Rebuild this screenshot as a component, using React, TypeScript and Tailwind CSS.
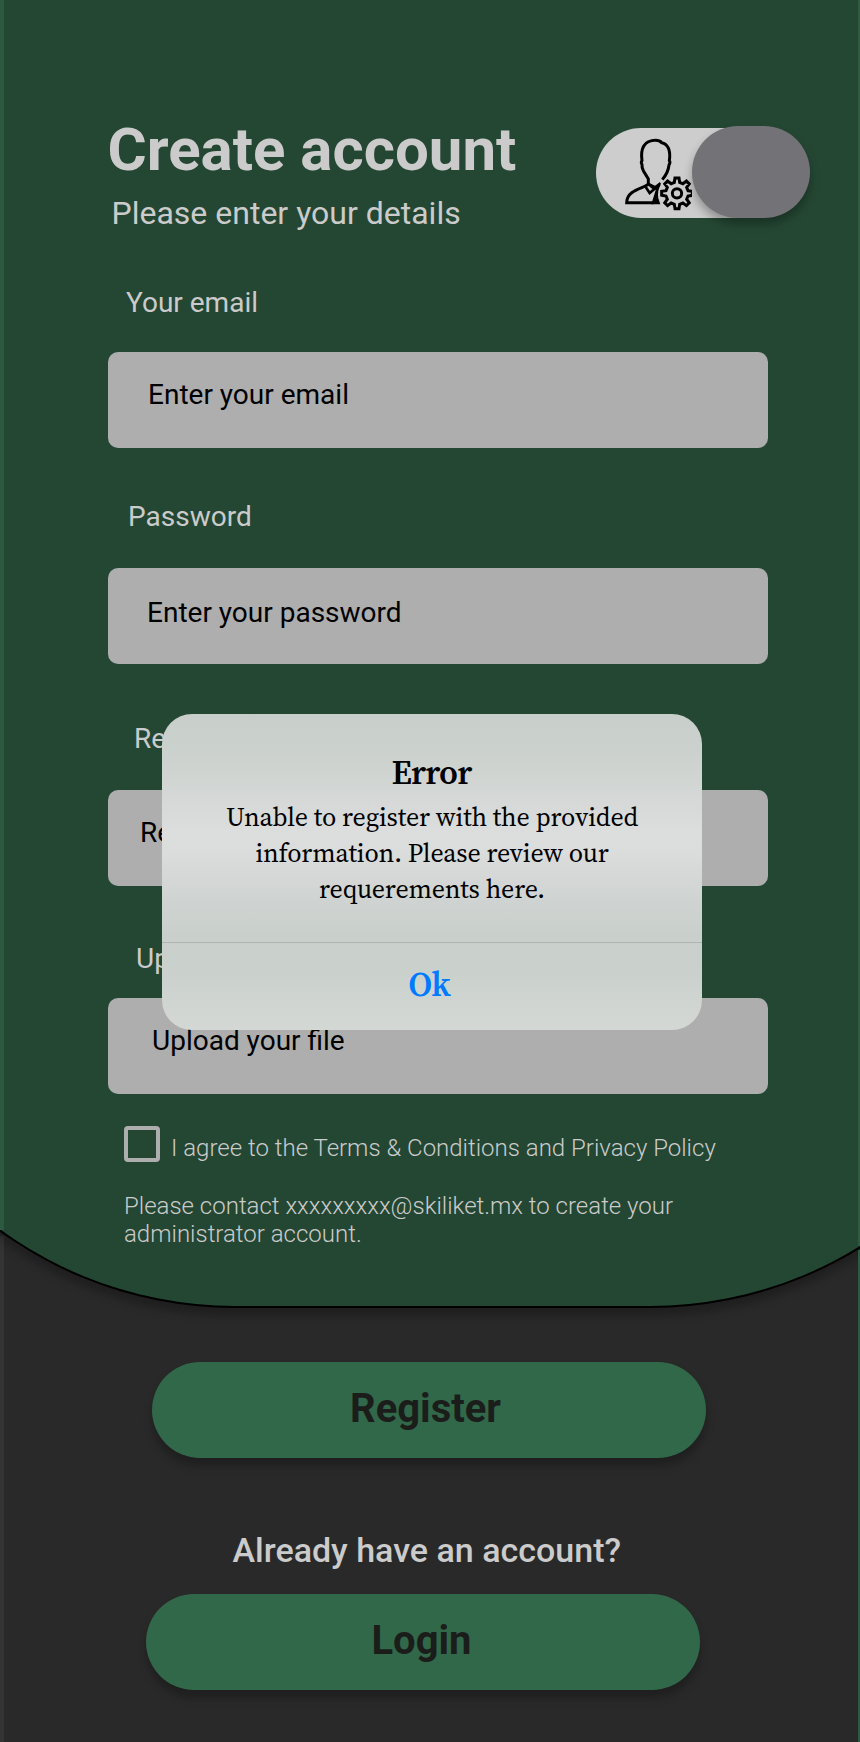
type FieldProps = {
  label: string;
  placeholder: string;
  labelClass: string;
  boxClass: string;
};

function Field({ label, placeholder, labelClass, boxClass }: FieldProps) {
  return (
    <div className="flex flex-col">
      <span className={`text-[28px] leading-8 text-[#cbcbcb] ${labelClass}`}>{label}</span>
      <div className={`h-24 w-[660px] rounded-[10px] bg-[#aeaeae] text-[28px] leading-8 text-black ${boxClass}`}>
        {placeholder}
      </div>
    </div>
  );
}

function gearPath(cx: number, cy: number) {
  const points: string[] = [];
  for (let i = 0; i < 8; i++) {
    const a = (i * Math.PI) / 4;
    const corners = [
      [33, -8],
      [46, -6],
      [46, 6],
      [33, 8],
    ];
    for (const [r, t] of corners) {
      const x = cx + r * Math.cos(a) - t * Math.sin(a);
      const y = cy + r * Math.sin(a) + t * Math.cos(a);
      points.push(`${x.toFixed(1)} ${y.toFixed(1)}`);
    }
  }
  return `M${points.join("L")}Z`;
}

function AdminIcon() {
  return (
    <svg viewBox="130 80 207 222" className="h-[74px] w-[69px]" fill="none" stroke="#000" strokeWidth="9">
      <path d="M206 224V206L191 181Q186 171 187 163Q183 156 187 151C182 116 192 90 228 90Q240 90 246 97C264 100 274 120 269 151Q273 156 268 164Q266 186 248 208" />
      <path d="M207 221C194 234 141 238 141 277H222" />
      <path d="M198 230L210 248L224 236L207 222" strokeWidth="8" />
      <path d="M241 216L224 231L228 240L215 282H242L236 264Q232 242 243 224Z" fill="#000" stroke="none" />
      <path d="M208 221L226 230L242 218" strokeWidth="6" />
      <path d={gearPath(292, 249)} strokeWidth="9" />
      <circle cx="292" cy="249" r="14" />
    </svg>
  );
}

function RoleToggle() {
  return (
    <div className="flex h-[92px] w-[214px] items-center">
      <div className="mt-0.5 flex h-[90px] w-[150px] shrink-0 items-start rounded-l-full bg-[#cdcdcd] pt-[9px] pl-[27px]">
        <AdminIcon />
      </div>
      <div className="-ml-[54px] h-[92px] w-[118px] shrink-0 rounded-full bg-[#737277] shadow-[0_6px_10px_rgba(0,0,0,0.3)]" />
    </div>
  );
}

function ErrorDialog() {
  return (
    <div
      role="alertdialog"
      className="absolute top-[714px] left-[162px] flex h-[316px] w-[540px] flex-col rounded-[30px] bg-linear-[180deg,#c8cec9_0%,#cbd1cd_12%,#dcdddd_37%,#dbdcdc_44%,#ced3d1_60%,#c9d0cb_70%,#cad1cc_82%,#d4d8d5_100%] text-center font-['Source_Serif_4','Liberation_Serif',serif] text-black"
    >
      <div className="flex h-[228px] flex-col items-center pt-9">
        <h2 className="pr-px text-[34px] leading-[44px] font-semibold tracking-[-0.82px]">Error</h2>
        <p className="mt-[5px] w-[440px] text-[26px] leading-9 tracking-[-0.16px]">
          Unable to register with the provided information. Please review our requerements here.
        </p>
      </div>
      <button className="flex h-[88px] items-center justify-center border-t border-[#b0b5b2] pr-1.5 pb-[5px] text-[34px] font-semibold tracking-[-0.82px] text-[#007aff]">
        Ok
      </button>
    </div>
  );
}

export default function App() {
  return (
    <main className="relative h-[1742px] w-[860px] overflow-hidden bg-[#292929] font-['Roboto',sans-serif]">
      <section className="-ml-[165px] h-[1308px] w-[1215px] rounded-b-[400px] border-x-2 border-b-2 border-black bg-[#244733] pl-[271px] shadow-[0_8px_8px_rgba(0,0,0,0.25)]">
        <header className="flex pt-[114px] text-[#cbcbcb]">
          <div className="w-[488px]">
            <h1 className="-ml-[0.5px] text-[60px] leading-[71px] font-bold">Create account</h1>
            <p className="mt-[9px] pl-[3.5px] text-[32px] leading-[38px]">Please enter your details</p>
          </div>
          <div className="mt-3">
            <RoleToggle />
          </div>
        </header>

        <form className="mt-[55px] flex flex-col">
          <Field label="Your email" placeholder="Enter your email" labelClass="pl-[18px]" boxClass="mt-[33px] pt-[27px] pl-10" />
          <Field label="Password" placeholder="Enter your password" labelClass="mt-[53px] pl-5" boxClass="mt-[35px] pt-[29px] pl-[39px]" />
          <Field label="Repeat password" placeholder="Repeat your password" labelClass="mt-[59px] pl-[26px]" boxClass="mt-[35px] pt-[27px] pl-8" />
          <Field label="Upload your file" placeholder="Upload your file" labelClass="mt-[57px] pl-7" boxClass="mt-[23px] pt-[27px] pl-11" />

          <label className="mt-8 flex h-9 items-start pl-4 text-2xl leading-7 font-light text-[#cbcbcb]">
            <span className="size-9 rounded-[4px] border-4 border-[#aeaeae]" />
            <span className="mt-2 ml-[11px]">I agree to the Terms &amp; Conditions and Privacy Policy</span>
          </label>
          <p className="mt-[30px] w-[600px] pl-4 text-2xl leading-7 font-light text-[#cbcbcb]">
            Please contact xxxxxxxxx@skiliket.mx to create your administrator account.
          </p>
        </form>
      </section>

      <section className="flex flex-col items-start pt-[54px]">
        <button className="ml-[152px] h-24 w-[554px] rounded-full bg-[#32684a] pr-[7px] pb-0.5 text-[40px] font-bold text-[#1b1d1a] shadow-[0_8px_8px_rgba(0,0,0,0.25)]">
          Register
        </button>
        <p className="mt-[72px] ml-[232.5px] text-[34px] leading-10 font-medium text-[#cbcbcb]">Already have an account?</p>
        <button className="mt-6 ml-[146px] h-24 w-[554px] rounded-full bg-[#32684a] pr-[3px] pb-0.5 text-[40px] font-bold text-[#1b1d1a] shadow-[0_8px_8px_rgba(0,0,0,0.25)]">
          Login
        </button>
      </section>

      <div className="absolute top-0 left-0 h-[1230px] w-1 bg-[#2b5a41]" />
      <div className="absolute top-[1236px] left-0 h-[506px] w-1 bg-white/5" />
      <div className="absolute top-0 right-0 h-[1246px] w-0.5 bg-[#2b5a41]" />
      <div className="absolute top-[1250px] right-0 h-[492px] w-0.5 bg-[#2b5a41]" />

      <ErrorDialog />
    </main>
  );
}
